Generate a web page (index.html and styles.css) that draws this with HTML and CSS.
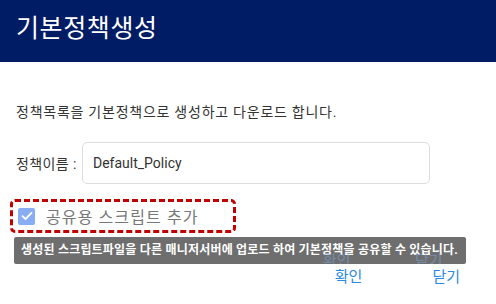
FILE: index.html
```html
<!DOCTYPE html>
<html lang="ko">
<head>
    <meta charset="UTF-8">
    <meta name="viewport" content="width=device-width, initial-scale=1.0">
    <title>기본정책생성</title>
    <link rel="stylesheet" href="styles.css">
</head>
<body>
    <div class="dialog">
        <div class="dialog-header">
            <h1>기본정책생성</h1>
        </div>
        <div class="dialog-body">
            <p class="desc">정책목록을 기본정책으로 생성하고 다운로드 합니다.</p>
            <div class="field-row">
                <label class="field-label" for="policy-name">정책이름 :</label>
                <input type="text" id="policy-name" class="policy-name" value="Default_Policy">
            </div>
            <div class="share-box">
                <span class="check">
                    <svg width="12" height="10" viewBox="0 0 12 10"><path d="M1.5 5.2 L4.5 8 L10.5 1.8" fill="none" stroke="#fff" stroke-width="1.8" stroke-linecap="round" stroke-linejoin="round"/></svg>
                </span>
                <span class="share-label">공유용 스크립트 추가</span>
            </div>
            <div class="tooltip">
                생성된 스크립트파일을 다른 매니저서버에 업로드 하여 기본정책을 공유할 수 있습니다.
                <span class="ghost ghost-ok">확인</span>
                <span class="ghost ghost-close">닫기</span>
            </div>
        </div>
        <div class="dialog-footer">
            <button class="btn">확인</button>
            <button class="btn">닫기</button>
        </div>
    </div>
</body>
</html>
```

FILE: styles.css
```css
body {
    margin: 0;
    padding: 0;
    background-color: #fff;
    font-family: Roboto, "Noto Sans CJK KR", sans-serif;
    color: #333;
}

.dialog {
    width: 496px;
    height: 304px;
    position: relative;
    overflow: hidden;
}

.dialog-header {
    height: 62px;
    background-color: #001c64;
    display: flex;
    align-items: center;
    padding: 0 16px 4px;
    box-sizing: border-box;
}

.dialog-header h1 {
    margin: 0;
    color: #fff;
    font-size: 25px;
    font-weight: 400;
    letter-spacing: 0.6px;
    line-height: 30px;
}

.dialog-body {
    padding: 0 16px;
    position: relative;
}

.desc {
    margin: 0;
    padding-top: 40px;
    font-size: 14px;
    letter-spacing: 0.75px;
    line-height: 20px;
    color: #333;
}

.field-row {
    display: flex;
    align-items: center;
    margin-top: 20px;
}

.field-label {
    font-size: 14px;
    letter-spacing: 0.4px;
    color: #333;
    width: 66px;
}

.policy-name {
    width: 348px;
    height: 42px;
    box-sizing: border-box;
    border: 1px solid #ddd;
    border-radius: 5px;
    padding: 0 10px;
    font-family: Roboto, "Noto Sans CJK KR", sans-serif;
    font-size: 14px;
    color: #333;
    outline: none;
}

.share-box {
    display: flex;
    align-items: center;
    width: 226px;
    height: 34px;
    box-sizing: border-box;
    margin: 15px 0 0 -6px;
    padding-left: 5px;
    border: 3px dashed #c00000;
    border-radius: 5px;
}

.check {
    width: 17px;
    height: 17px;
    border-radius: 2px;
    background-color: #88adf5;
    display: flex;
    align-items: center;
    justify-content: center;
}

.share-label {
    margin-left: 11px;
    font-size: 16px;
    letter-spacing: 1.1px;
    color: #777;
}

.tooltip {
    position: absolute;
    left: 14px;
    top: 175px;
    width: 452px;
    height: 27px;
    box-sizing: border-box;
    padding-left: 7px;
    background-color: #6e6e6e;
    border-radius: 2px;
    color: #fff;
    font-size: 12px;
    font-weight: bold;
    letter-spacing: 0.2px;
    line-height: 27px;
    white-space: nowrap;
    overflow: hidden;
    z-index: 2;
}

.ghost {
    position: absolute;
    top: 21px;
    font-size: 15px;
    font-weight: normal;
    letter-spacing: 0;
    line-height: 6px;
    height: 6px;
    color: rgba(120, 170, 230, 0.5);
}

.ghost-ok {
    left: 309px;
}

.ghost-close {
    left: 401px;
}

.dialog-footer {
    display: flex;
    justify-content: flex-end;
    gap: 40px;
    padding: 34px 21px 0 0;
}

.btn {
    background: none;
    border: none;
    padding: 0 15px;
    font-family: Roboto, "Noto Sans CJK KR", sans-serif;
    font-size: 15px;
    line-height: 20px;
    color: #2a8ae0;
    cursor: pointer;
}
```
